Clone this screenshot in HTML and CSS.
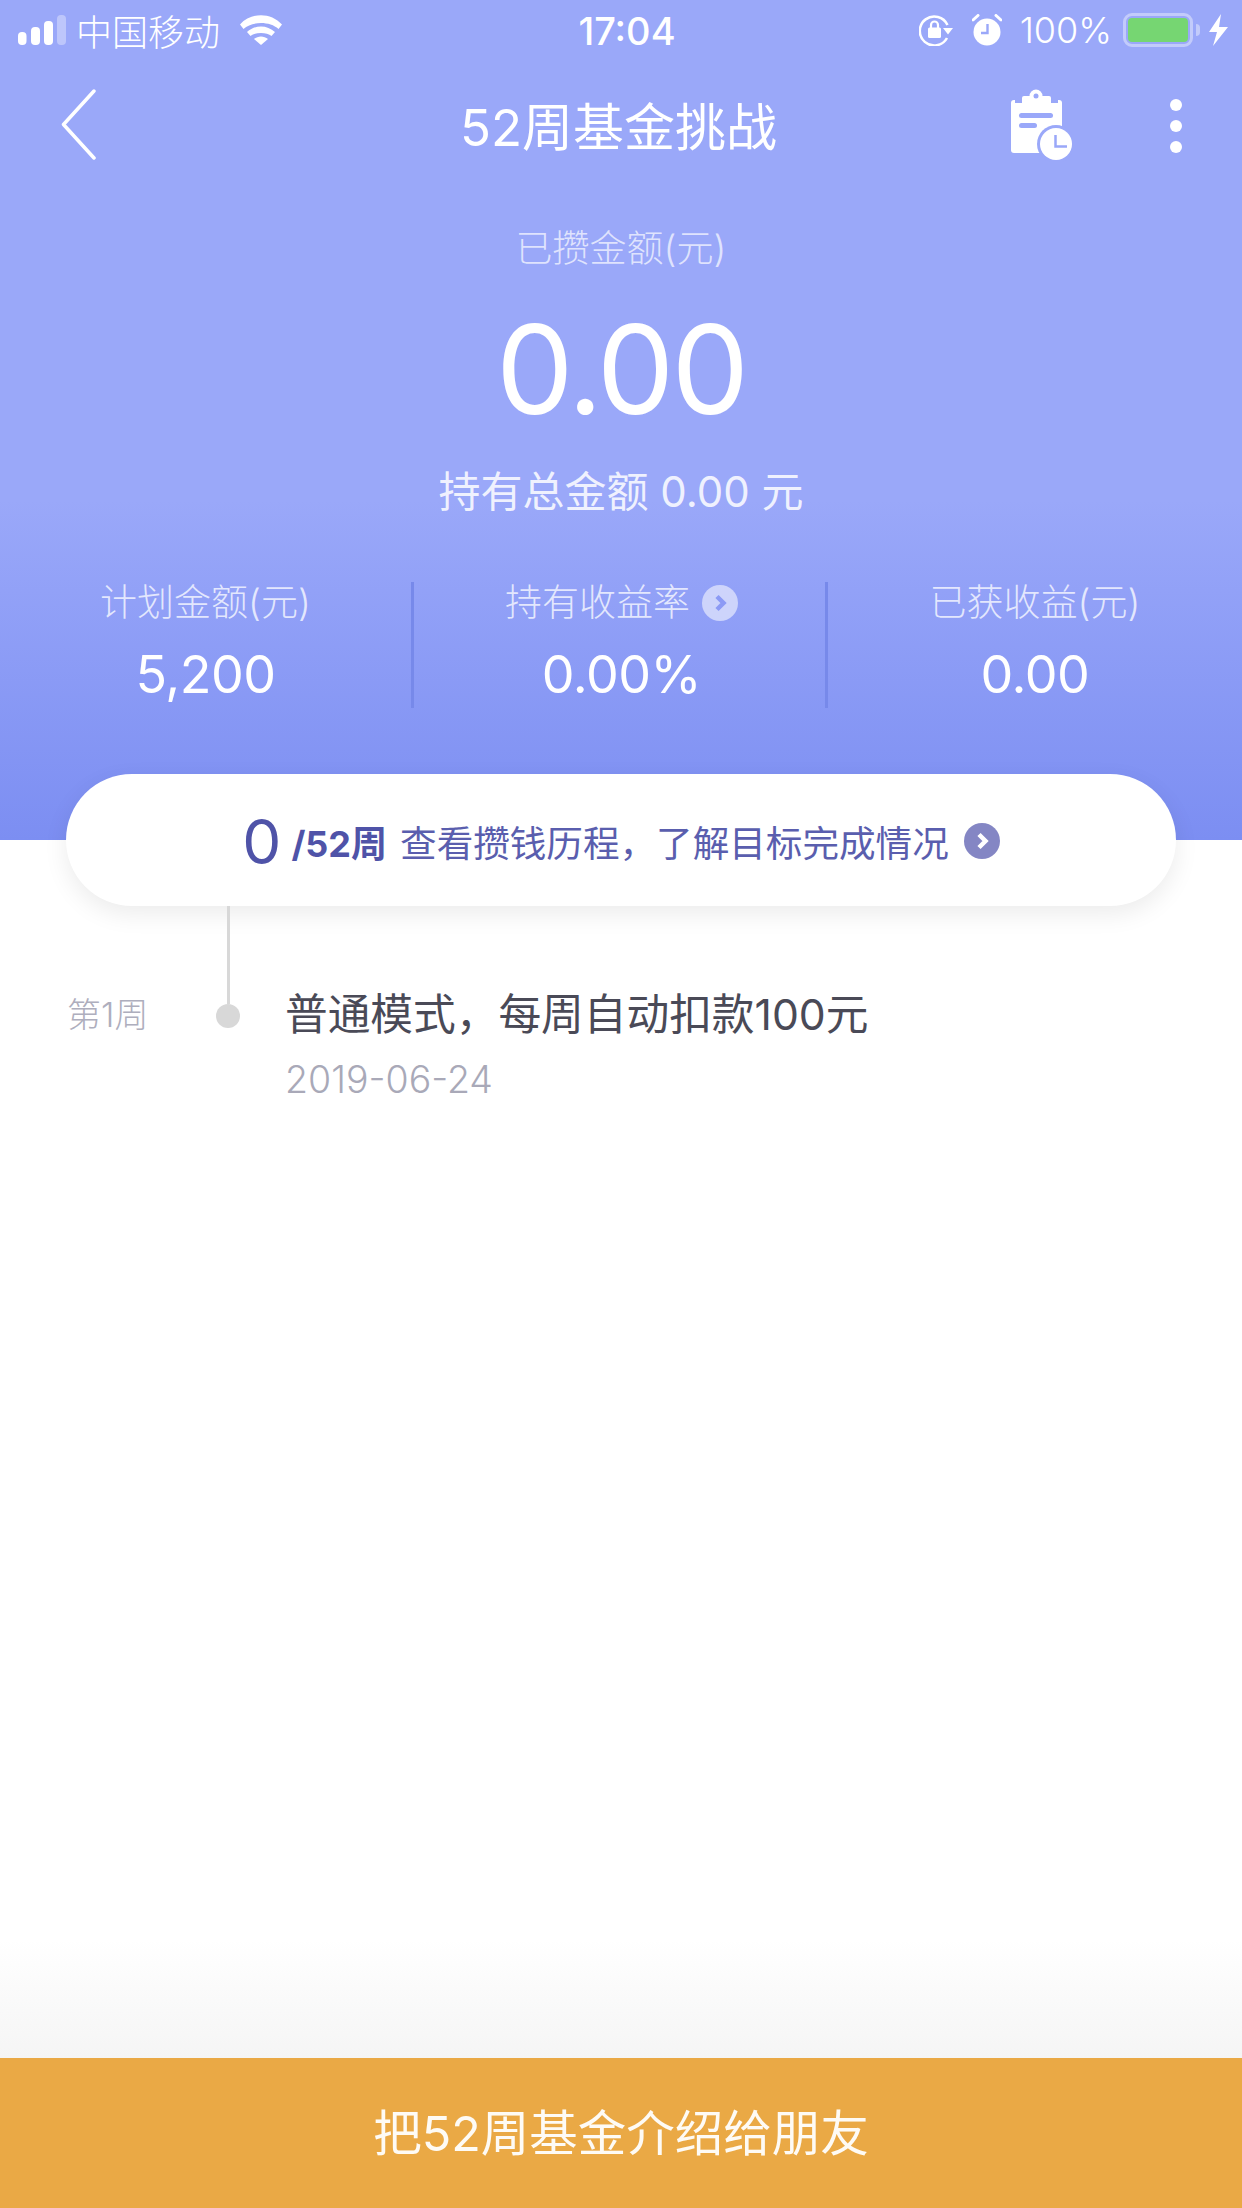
FILE: index.html
```html
<!DOCTYPE html>
<html lang="zh-CN">
<head>
    <meta charset="UTF-8">
    <meta name="viewport" content="width=device-width, initial-scale=1.0">
    <title>52周基金挑战</title>
    <link rel="stylesheet" href="styles.css">
</head>
<body>
    <div class="page">
        <header class="hero">
            <div class="status-bar">
                <div class="status-left">
                    <svg class="signal" viewBox="0 0 48 30">
                        <rect x="0" y="17" width="8.5" height="13" rx="4" fill="#fff"/>
                        <rect x="13" y="12" width="9" height="18" rx="4" fill="#fff"/>
                        <rect x="26" y="6" width="9" height="24" rx="4" fill="#fff"/>
                        <rect x="39" y="0" width="9" height="30" rx="4" fill="#fff" fill-opacity="0.35"/>
                    </svg>
                    <span class="carrier">中国移动</span>
                    <svg class="wifi" viewBox="0 0 42 30">
                        <path d="M0 9.5 L3.5 14 C12 6 30 6 38.5 14 L42 9.5 C31 -3 11 -3 0 9.5 Z" fill="#fff"/>
                        <path d="M7 17 L10.5 21 C15 17 27 17 31.5 21 L35 17 C27 9.500 15 9.500 7 17 Z" fill="#fff"/>
                        <path d="M14 24 L21 30 L28 24 C24 20.500 18 20.500 14 24 Z" fill="#fff"/>
                    </svg>
                </div>
                <div class="clock">17:04</div>
                <div class="status-right">
                    <svg class="lock-icon" viewBox="0 0 34 32">
                        <path d="M28 24 A14.500 14.500 0 1 1 28.500 11" fill="none" stroke="#fff" stroke-width="2.500"/>
                        <path d="M24 14 H34 L29 20.500 Z" fill="#fff"/>
                        <rect x="9" y="13.500" width="13" height="10.500" rx="1.500" fill="#fff"/>
                        <path d="M12 14 V11 A3.500 3.500 0 0 1 19 11 V14" fill="none" stroke="#fff" stroke-width="2.200"/>
                    </svg>
                    <svg class="alarm-icon" viewBox="0 0 30 32">
                        <circle cx="15" cy="18" r="13.500" fill="#fff"/>
                        <path d="M15.500 10 V19 H9" fill="none" stroke="#9aa8f9" stroke-width="2.400"/>
                        <path d="M1 6 L6 1.500 M29 6 L24 1.500" stroke="#fff" stroke-width="3" stroke-linecap="round"/>
                    </svg>
                    <span class="percent">100%</span>
                    <div class="battery"><div class="battery-fill"></div></div>
                    <div class="battery-nub"></div>
                    <svg class="bolt" viewBox="0 0 19 32">
                        <path d="M12 0 L0 18 H8 L4 32 L19 13 H10 Z" fill="#fff"/>
                    </svg>
                </div>
            </div>

            <nav class="nav-bar">
                <div class="nav-left">
                    <svg class="back-icon" viewBox="0 0 35 71">
                        <path d="M33 2 L2.500 35.500 L33 69" fill="none" stroke="#fff" stroke-width="3.500" stroke-linecap="round" stroke-linejoin="round"/>
                    </svg>
                </div>
                <h1 class="nav-title">52周基金挑战</h1>
                <div class="nav-right">
                    <svg class="record-icon" viewBox="0 0 62 73">
                        <rect x="0" y="11" width="51" height="53" rx="3" fill="#fff"/>
                        <rect x="11" y="7" width="29" height="9" rx="2" fill="#fff"/>
                        <rect x="4" y="9" width="7" height="5" fill="#9aa8f9"/>
                        <rect x="40" y="9" width="7" height="5" fill="#9aa8f9"/>
                        <circle cx="25" cy="7" r="6.500" fill="#fff"/>
                        <circle cx="25" cy="7" r="2.500" fill="#9aa8f9"/>
                        <rect x="8" y="24" width="34" height="5" rx="2.500" fill="#9aa8f9"/>
                        <rect x="8" y="34" width="18" height="5" rx="2.500" fill="#9aa8f9"/>
                        <circle cx="45" cy="55" r="19" fill="#9aa8f9"/>
                        <circle cx="45" cy="55" r="16" fill="#fff"/>
                        <path d="M44.500 46 V57.500 H56" fill="none" stroke="#9aa8f9" stroke-width="2.500"/>
                    </svg>
                    <div class="dots">
                        <span class="dot"></span>
                        <span class="dot"></span>
                        <span class="dot"></span>
                    </div>
                </div>
            </nav>

            <div class="saved-label">已攒金额(元)</div>
            <div class="saved-amount">0.00</div>
            <div class="saved-total">持有总金额 0.00 元</div>

            <div class="stats">
                <div class="stat">
                    <div class="stat-label">计划金额(元)</div>
                    <div class="stat-value">5,200</div>
                </div>
                <div class="stat">
                    <div class="stat-label">持有收益率
                        <svg class="stat-arrow" viewBox="0 0 36 36">
                            <circle cx="18" cy="18" r="18" fill="#fff" fill-opacity="0.55"/>
                            <path d="M15 11.500 L21.500 18 L15 24.500" fill="none" stroke="#8c9af5" stroke-width="4.500"/>
                        </svg>
                    </div>
                    <div class="stat-value">0.00%</div>
                </div>
                <div class="stat">
                    <div class="stat-label">已获收益(元)</div>
                    <div class="stat-value">0.00</div>
                </div>
            </div>
        </header>

        <main class="content">
            <div class="progress-pill">
                <span class="progress-count">0</span>
                <span class="progress-total">/52周</span>
                <span class="progress-text">查看攒钱历程，了解目标完成情况</span>
                <svg class="progress-arrow" viewBox="0 0 36 36">
                    <circle cx="18" cy="18" r="18" fill="#8486c4"/>
                    <path d="M15 11.500 L21.500 18 L15 24.500" fill="none" stroke="#fff" stroke-width="4.500"/>
                </svg>
            </div>

            <div class="timeline-row">
                <div class="week">第1周</div>
                <div class="node">
                    <div class="node-line"></div>
                    <div class="node-dot"></div>
                </div>
                <div class="record">
                    <div class="record-title">普通模式，每周自动扣款100元</div>
                    <div class="record-date">2019-06-24</div>
                </div>
            </div>
        </main>

        <button class="share-btn">把52周基金介绍给朋友</button>
    </div>
</body>
</html>
```

FILE: styles.css
```css
* {
    margin: 0;
    padding: 0;
    box-sizing: border-box;
    font-family: Inter, 'Noto Sans CJK SC', sans-serif;
}

body {
    background-color: white;
}

.page {
    width: 1242px;
    height: 2208px;
    display: flex;
    flex-direction: column;
    overflow: hidden;
}

/* top block */
.hero {
    height: 840px;
    background: linear-gradient(#9aa8f9 0, #9aa8f9 500px, #7c8ef2 840px);
    color: white;
    text-align: center;
}

.status-bar {
    height: 60px;
    display: grid;
    grid-template-columns: 1fr auto 1fr;
    align-items: center;
    padding: 0 14px 0 18px;
    font-size: 36px;
    font-weight: 300;
}

.status-left,
.status-right {
    display: flex;
    align-items: center;
}

.status-right {
    justify-content: flex-end;
}

.signal {
    width: 48px;
    height: 30px;
}

.carrier {
    margin-left: 10px;
}

.wifi {
    width: 42px;
    height: 30px;
    margin-left: 20px;
}

.clock {
    padding-top: 2px;
    margin-left: 8px;
    font-size: 38px;
    font-weight: 500;
}

.lock-icon {
    width: 34px;
    height: 32px;
}

.alarm-icon {
    width: 30px;
    height: 32px;
    margin-left: 19px;
}

.percent {
    margin-left: 18px;
}

.battery {
    width: 70px;
    height: 34px;
    margin-left: 11px;
    padding: 2px;
    border: 3px solid rgba(255, 255, 255, 0.4);
    border-radius: 9px;
}

.battery-fill {
    height: 100%;
    background-color: #76d672;
    border-radius: 4px;
}

.battery-nub {
    width: 4px;
    height: 12px;
    margin-left: 3px;
    background-color: rgba(255, 255, 255, 0.4);
    border-radius: 0 6px 6px 0;
}

.bolt {
    width: 19px;
    height: 32px;
    margin-left: 9px;
}

.nav-bar {
    height: 128px;
    display: grid;
    grid-template-columns: 1fr auto 1fr;
    align-items: center;
    padding: 0 60px 0 61px;
}

.nav-left {
    display: flex;
}

.back-icon {
    width: 35px;
    height: 71px;
}

.nav-title {
    margin-right: 6px;
    font-size: 51px;
    font-weight: 400;
}

.nav-right {
    display: flex;
    align-items: center;
    justify-content: flex-end;
    padding-top: 3px;
}

.record-icon {
    width: 62px;
    height: 73px;
}

.dots {
    display: flex;
    flex-direction: column;
    gap: 9px;
    margin-left: 97px;
}

.dot {
    width: 12px;
    height: 12px;
    background-color: white;
    border-radius: 50%;
}

.saved-label {
    margin-top: 36px;
    font-size: 37px;
    font-weight: 300;
    line-height: 50px;
    color: rgba(255, 255, 255, 0.7);
}

.saved-amount {
    margin-top: 21px;
    font-size: 123px;
    font-weight: 400;
    letter-spacing: -3px;
    line-height: 150px;
}

.saved-total {
    margin-top: 17px;
    font-size: 42px;
    font-weight: 400;
    line-height: 60px;
    color: rgba(255, 255, 255, 0.85);
}

.stats {
    display: grid;
    grid-template-columns: 411px 414px 1fr;
    height: 126px;
    margin-top: 60px;
}

.stat {
    border-left: 3px solid #7789ea;
}

.stat:first-child {
    border-left: none;
}

.stat:nth-child(2) {
    padding-left: 4px;
}

.stat-label {
    display: flex;
    align-items: center;
    justify-content: center;
    gap: 12px;
    font-size: 37px;
    font-weight: 300;
    line-height: 42px;
    color: rgba(255, 255, 255, 0.75);
}

.stat-arrow {
    width: 36px;
    height: 36px;
}

.stat-value {
    margin-top: 21px;
    font-size: 52px;
    font-weight: 400;
    letter-spacing: -0.5px;
    line-height: 60px;
}

/* lower block */
.content {
    flex: 1;
    background: linear-gradient(white 0, white 1100px, #f5f5f5 100%);
}

.progress-pill {
    height: 132px;
    margin: -66px 66px 0;
    padding-top: 2px;
    display: flex;
    align-items: center;
    justify-content: center;
    background-color: white;
    border-radius: 66px;
    box-shadow: 0 8px 24px rgba(0, 0, 0, 0.08);
    color: #4f53a8;
}

.progress-count {
    font-size: 62px;
    font-weight: 400;
}

.progress-total {
    margin-left: 10px;
    font-size: 36px;
    font-weight: 700;
}

.progress-text {
    margin-left: 13px;
    font-size: 36.6px;
    font-weight: 400;
    color: #5a5eae;
}

.progress-arrow {
    width: 36px;
    height: 36px;
    margin-left: 15px;
}

.timeline-row {
    display: flex;
    padding-left: 67px;
}

.week {
    width: 149px;
    padding-top: 89px;
    font-size: 34px;
    font-weight: 300;
    line-height: 40px;
    color: #aeaebd;
}

.node {
    display: flex;
    flex-direction: column;
    align-items: center;
    width: 24px;
}

.node-line {
    width: 3px;
    height: 98px;
    background-color: #d8d8d8;
}

.node-dot {
    width: 24px;
    height: 24px;
    background-color: #d8d8d8;
    border-radius: 50%;
}

.record {
    margin-left: 45px;
    padding-top: 79px;
}

.record-title {
    font-size: 42.7px;
    font-weight: 400;
    line-height: 60px;
    color: #4a4a57;
}

.record-date {
    margin-top: 10px;
    font-size: 37.5px;
    font-weight: 300;
    line-height: 50px;
    color: #a9a9b8;
}

.share-btn {
    height: 150px;
    padding-bottom: 6px;
    background-color: #eaa945;
    border: none;
    color: rgba(255, 255, 255, 0.95);
    font-size: 48.500px;
    font-weight: 400;
}
```
